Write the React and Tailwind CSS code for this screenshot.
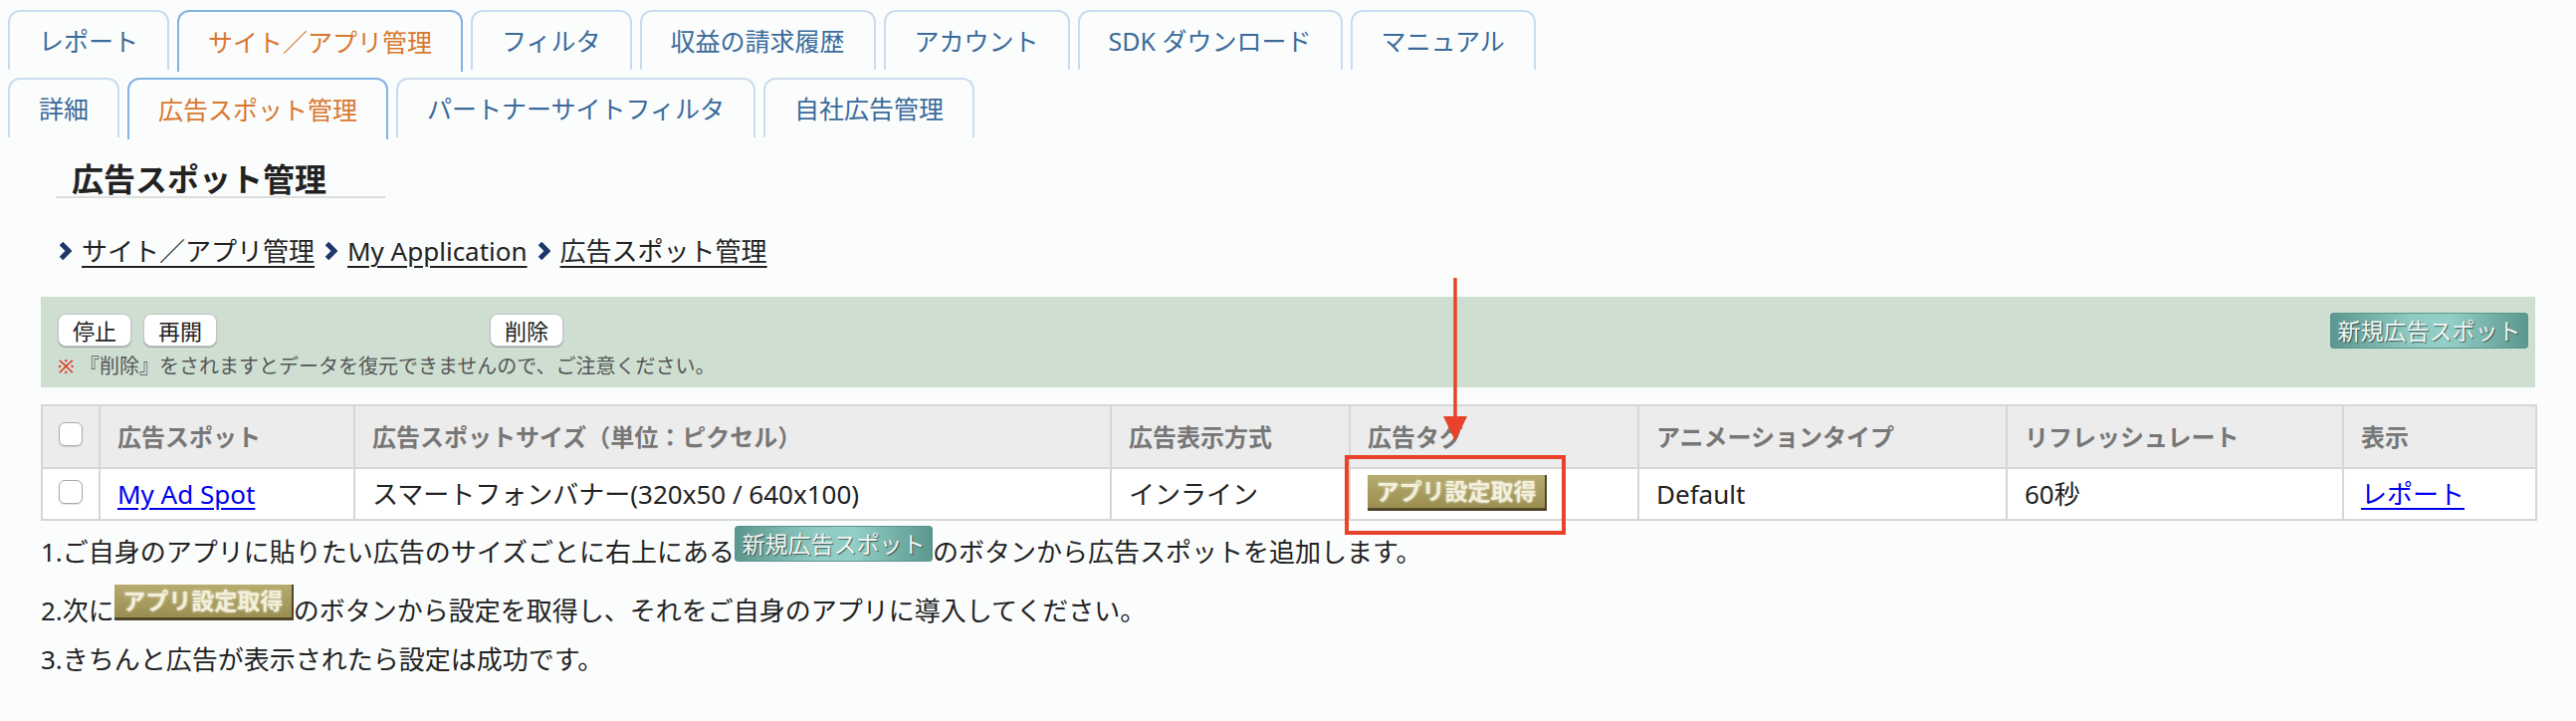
import React from 'react'

const TOP_TABS = ['レポート', 'サイト／アプリ管理', 'フィルタ', '収益の請求履歴', 'アカウント', 'SDK ダウンロード', 'マニュアル']
const SUB_TABS = ['詳細', '広告スポット管理', 'パートナーサイトフィルタ', '自社広告管理']

function Tab({ label, active }) {
  if (active) {
    return (
      <div className="h-[62px] px-[29px] flex items-center rounded-t-[12px] border-2 border-b-0 border-[#82b3e2] bg-[#fbfdfd] text-[#d8772d] text-[25px] leading-none whitespace-nowrap">
        {label}
      </div>
    )
  }
  return (
    <div className="h-[60px] px-[29px] flex items-center rounded-t-[12px] border-2 border-b-0 border-[#c9dcee] bg-[#fbfdfd] text-[#3a6a9a] text-[25px] leading-none whitespace-nowrap">
      {label}
    </div>
  )
}

function Chevron() {
  return (
    <svg width="13" height="18" viewBox="0 0 13 18" className="shrink-0">
      <path d="M2.5 1.5 L10 9 L2.5 16.5" fill="none" stroke="#1d376a" strokeWidth="5" />
    </svg>
  )
}

function Crumb({ children }) {
  return <a className="underline underline-offset-[5px] decoration-[2px] text-[#222]">{children}</a>
}

function WhiteButton({ children, className = '' }) {
  return (
    <button
      className={
        'h-[33px] px-[14px] rounded-[8px] bg-white border border-[#c4c4c4] shadow-[0_1px_1px_rgba(0,0,0,0.25)] text-[22px] leading-none text-[#222] ' +
        className
      }
    >
      {children}
    </button>
  )
}

function NewSpotButton() {
  return (
    <span className="inline-block overflow-hidden align-baseline w-[199px] h-[36px] rounded-[3px] border border-[#5a948c] bg-[linear-gradient(90deg,#5c978f_0%,#8ecac2_40%,#93cfc7_60%,#5c978f_100%)] text-center text-[23px] leading-[34px] text-[#f4f7f6] [text-shadow:1px_1px_1px_rgba(0,0,0,0.55)]">
      新規広告スポット
    </span>
  )
}

function AppSettingButton() {
  return (
    <span className="inline-block overflow-hidden align-baseline w-[180px] h-[36px] bg-linear-to-b from-[#b7ac70] to-[#998d50] border-b-[3px] border-r-[2px] border-[#4e4626] text-center text-[23px] leading-[33px] font-bold text-[#f2efdc] [text-shadow:0_0_3px_rgba(255,255,240,0.7)]">
      アプリ設定取得
    </span>
  )
}

function Checkbox() {
  return <span className="inline-block w-[24px] h-[24px] rounded-[6px] border border-[#a9a9a9] bg-white shadow-[0_1px_1px_rgba(0,0,0,0.12)]" />
}

const HEADERS = ['広告スポット', '広告スポットサイズ（単位：ピクセル）', '広告表示方式', '広告タグ', 'アニメーションタイプ', 'リフレッシュレート', '表示']

export default function App() {
  return (
    <div className="relative min-h-screen bg-[#fbfdfd] text-[#222] font-['Noto_Sans','Noto_Sans_CJK_JP',sans-serif]">
      <div className="pl-2 pt-[10px]">
        <div className="flex items-start gap-2 h-[60px]">
          {TOP_TABS.map((t) => (
            <Tab key={t} label={t} active={t === 'サイト／アプリ管理'} />
          ))}
        </div>
        <div className="flex items-start gap-2 h-[60px] mt-2">
          {SUB_TABS.map((t) => (
            <Tab key={t} label={t} active={t === '広告スポット管理'} />
          ))}
        </div>
      </div>

      <h1 className="mt-[24px] ml-[56px] w-[331px] pl-4 border-b-2 border-[#dddddd] text-[32px] leading-[35px] font-bold text-[#222]">
        広告スポット管理
      </h1>

      <div className="mt-[35px] ml-[59px] flex items-center gap-[10px] text-[26px] leading-[36px]">
        <Chevron />
        <Crumb>サイト／アプリ管理</Crumb>
        <Chevron />
        <Crumb>My Application</Crumb>
        <Chevron />
        <Crumb>広告スポット管理</Crumb>
      </div>

      <div className="mt-[28px] ml-[41px] w-[2506px] h-[91px] bg-[#cedfd2] flex justify-between pl-[17px] pr-[7px] pt-[16px]">
        <div className="pt-[1px]">
          <div className="flex gap-[12px]">
            <WhiteButton>停止</WhiteButton>
            <WhiteButton>再開</WhiteButton>
            <WhiteButton className="ml-[262px]">削除</WhiteButton>
          </div>
          <p className="mt-[6px] text-[20px] leading-[28px] text-[#555]">
            <span className="text-[#e0301e]">※</span> 『削除』をされますとデータを復元できませんので、ご注意ください。
          </p>
        </div>
        <div>
          <NewSpotButton />
        </div>
      </div>

      <table className="mt-[17px] ml-[41px] w-[2506px] table-fixed border-collapse border-2 border-[#d6d6d6]">
        <colgroup>
          <col className="w-[58px]" />
          <col className="w-[256px]" />
          <col className="w-[760px]" />
          <col className="w-[240px]" />
          <col className="w-[290px]" />
          <col className="w-[370px]" />
          <col className="w-[338px]" />
          <col className="w-[194px]" />
        </colgroup>
        <thead>
          <tr className="h-[63px] bg-[#ececec]">
            <th className="border-2 border-[#d6d6d6] text-center align-middle">
              <Checkbox />
            </th>
            {HEADERS.map((h) => (
              <th key={h} className="border-2 border-[#d6d6d6] pl-[17px] text-left text-[24px] font-bold text-[#777] whitespace-nowrap">
                {h}
              </th>
            ))}
          </tr>
        </thead>
        <tbody>
          <tr className="h-[52px] bg-white text-[26px]">
            <td className="border-2 border-[#d6d6d6] text-center align-middle">
              <Checkbox />
            </td>
            <td className="border-2 border-[#d6d6d6] pl-[17px]">
              <a className="text-[#0000ee] underline underline-offset-[4px]">My Ad Spot</a>
            </td>
            <td className="border-2 border-[#d6d6d6] pl-[17px] whitespace-nowrap">スマートフォンバナー(320x50 / 640x100)</td>
            <td className="border-2 border-[#d6d6d6] pl-[17px]">インライン</td>
            <td className="border-2 border-[#d6d6d6] pl-[17px] leading-none">
              <AppSettingButton />
            </td>
            <td className="border-2 border-[#d6d6d6] pl-[17px]">Default</td>
            <td className="border-2 border-[#d6d6d6] pl-[17px]">60秒</td>
            <td className="border-2 border-[#d6d6d6] pl-[17px]">
              <a className="text-[#0000ee] underline underline-offset-[4px]">レポート</a>
            </td>
          </tr>
        </tbody>
      </table>

      <div className="ml-[41px] text-[26px] leading-[38px] text-[#222]">
        <p className="mt-[5px]">
          1.ご自身のアプリに貼りたい広告のサイズごとに右上にある<NewSpotButton />のボタンから広告スポットを追加します。
        </p>
        <p className="mt-[14px]">
          2.次に<AppSettingButton />のボタンから設定を取得し、それをご自身のアプリに導入してください。
        </p>
        <p className="mt-[11px]">3.きちんと広告が表示されたら設定は成功です。</p>
      </div>

      <div className="absolute left-[1351px] top-[457px] w-[222px] h-[80px] border-4 border-[#e8432a]" />
      <svg className="absolute left-[1448px] top-[277px]" width="28" height="170" viewBox="0 0 28 170">
        <line x1="14" y1="2" x2="14" y2="146" stroke="#e8432a" strokeWidth="3.5" />
        <polygon points="2,141 26,141 14,166" fill="#e8432a" />
      </svg>
    </div>
  )
}
